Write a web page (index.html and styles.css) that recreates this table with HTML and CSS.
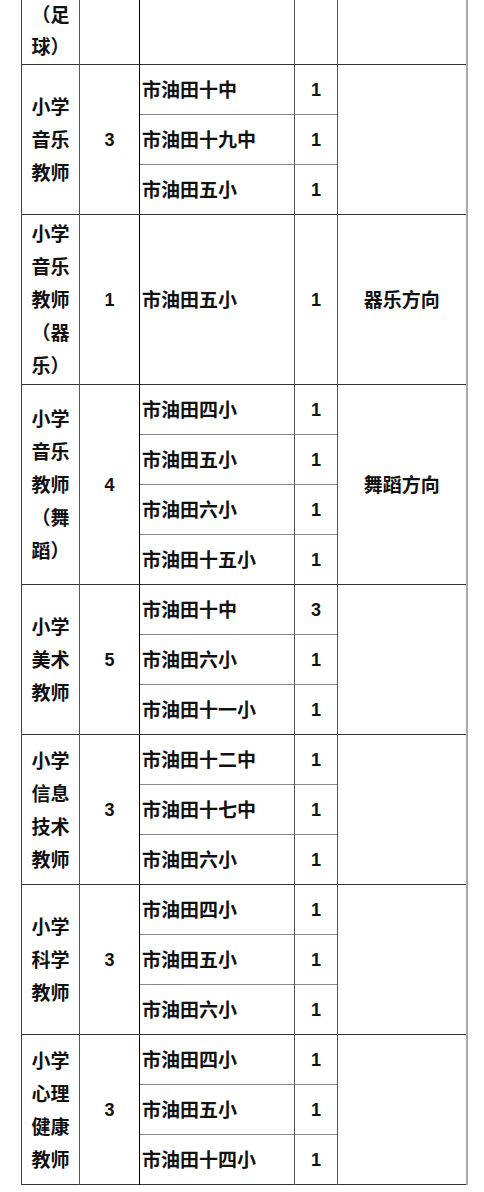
FILE: index.html
```html
<!DOCTYPE html>
<html lang="zh-CN">
<head>
<meta charset="utf-8">
<link rel="stylesheet" href="styles.css">
</head>
<body>
<div class="page">
<table class="grid">
<colgroup>
<col class="c1"><col class="c2"><col class="c3"><col class="c4"><col class="c5">
</colgroup>
<tbody>
<tr class="top"><td class="pos">（足<br>球）</td><td></td><td class="school"></td><td></td><td></td></tr>

<tr class="sub first"><td class="pos" rowspan="3">小学<br>音乐<br>教师</td><td class="num" rowspan="3">3</td><td class="school">市油田十中</td><td class="num">1</td><td class="note" rowspan="3"></td></tr>
<tr class="sub"><td class="school">市油田十九中</td><td class="num">1</td></tr>
<tr class="sub"><td class="school">市油田五小</td><td class="num">1</td></tr>

<tr class="big first"><td class="pos">小学<br>音乐<br>教师<br>（器<br>乐）</td><td class="num">1</td><td class="school">市油田五小</td><td class="num">1</td><td class="note">器乐方向</td></tr>

<tr class="sub first"><td class="pos" rowspan="4">小学<br>音乐<br>教师<br>（舞<br>蹈）</td><td class="num" rowspan="4">4</td><td class="school">市油田四小</td><td class="num">1</td><td class="note" rowspan="4">舞蹈方向</td></tr>
<tr class="sub"><td class="school">市油田五小</td><td class="num">1</td></tr>
<tr class="sub"><td class="school">市油田六小</td><td class="num">1</td></tr>
<tr class="sub"><td class="school">市油田十五小</td><td class="num">1</td></tr>

<tr class="sub first"><td class="pos" rowspan="3">小学<br>美术<br>教师</td><td class="num" rowspan="3">5</td><td class="school">市油田十中</td><td class="num">3</td><td class="note" rowspan="3"></td></tr>
<tr class="sub"><td class="school">市油田六小</td><td class="num">1</td></tr>
<tr class="sub"><td class="school">市油田十一小</td><td class="num">1</td></tr>

<tr class="sub first"><td class="pos" rowspan="3">小学<br>信息<br>技术<br>教师</td><td class="num" rowspan="3">3</td><td class="school">市油田十二中</td><td class="num">1</td><td class="note" rowspan="3"></td></tr>
<tr class="sub"><td class="school">市油田十七中</td><td class="num">1</td></tr>
<tr class="sub"><td class="school">市油田六小</td><td class="num">1</td></tr>

<tr class="sub first"><td class="pos" rowspan="3">小学<br>科学<br>教师</td><td class="num" rowspan="3">3</td><td class="school">市油田四小</td><td class="num">1</td><td class="note" rowspan="3"></td></tr>
<tr class="sub"><td class="school">市油田五小</td><td class="num">1</td></tr>
<tr class="sub"><td class="school">市油田六小</td><td class="num">1</td></tr>

<tr class="sub first"><td class="pos" rowspan="3">小学<br>心理<br>健康<br>教师</td><td class="num" rowspan="3">3</td><td class="school">市油田四小</td><td class="num">1</td><td class="note" rowspan="3"></td></tr>
<tr class="sub"><td class="school">市油田五小</td><td class="num">1</td></tr>
<tr class="sub last"><td class="school">市油田十四小</td><td class="num">1</td></tr>
</tbody>
</table>
</div>
</body>
</html>
```

FILE: styles.css
```css
html, body {
  margin: 0;
  padding: 0;
  background: #ffffff;
}

.page {
  padding-left: 21px;
  width: 463px;
}

.grid {
  border-collapse: collapse;
  table-layout: fixed;
  width: 446px;
  font-family: "Liberation Sans", "Noto Sans CJK SC", sans-serif;
  font-weight: bold;
  color: #111111;
  border-right: 2px solid #a8a8a8;
  border-bottom: 1px solid #333333;
}

.c1 { width: 58px; }
.c2 { width: 60px; }
.c3 { width: 155px; }
.c4 { width: 43px; }
.c5 { width: 129px; }

.grid td {
  border-left: 1px solid #555555;
  border-top: 1px solid #888888;
  padding: 2px 0 0 0;
  vertical-align: middle;
  font-size: 19px;
  line-height: 33px;
}

.grid tr.first td {
  border-top: 1px solid #333333;
}

.grid tr.top td {
  border-top: none;
  height: 64px;
  padding: 0;
  line-height: 32px;
  vertical-align: bottom;
}

.grid tr.sub td {
  height: 47px;
}

.grid tr.big td {
  height: 167px;
}

.grid td.pos {
  text-align: center;
  border-left: 1px solid #444444;
}

.grid td.num {
  text-align: center;
  font-size: 18px;
  font-family: "Liberation Sans", sans-serif;
}

.grid td.school {
  border-left: 1px solid #000000;
  padding-left: 2px;
  text-align: left;
  white-space: nowrap;
}

.grid td.note {
  text-align: center;
  border-left: 1px solid #555555;
}
```
